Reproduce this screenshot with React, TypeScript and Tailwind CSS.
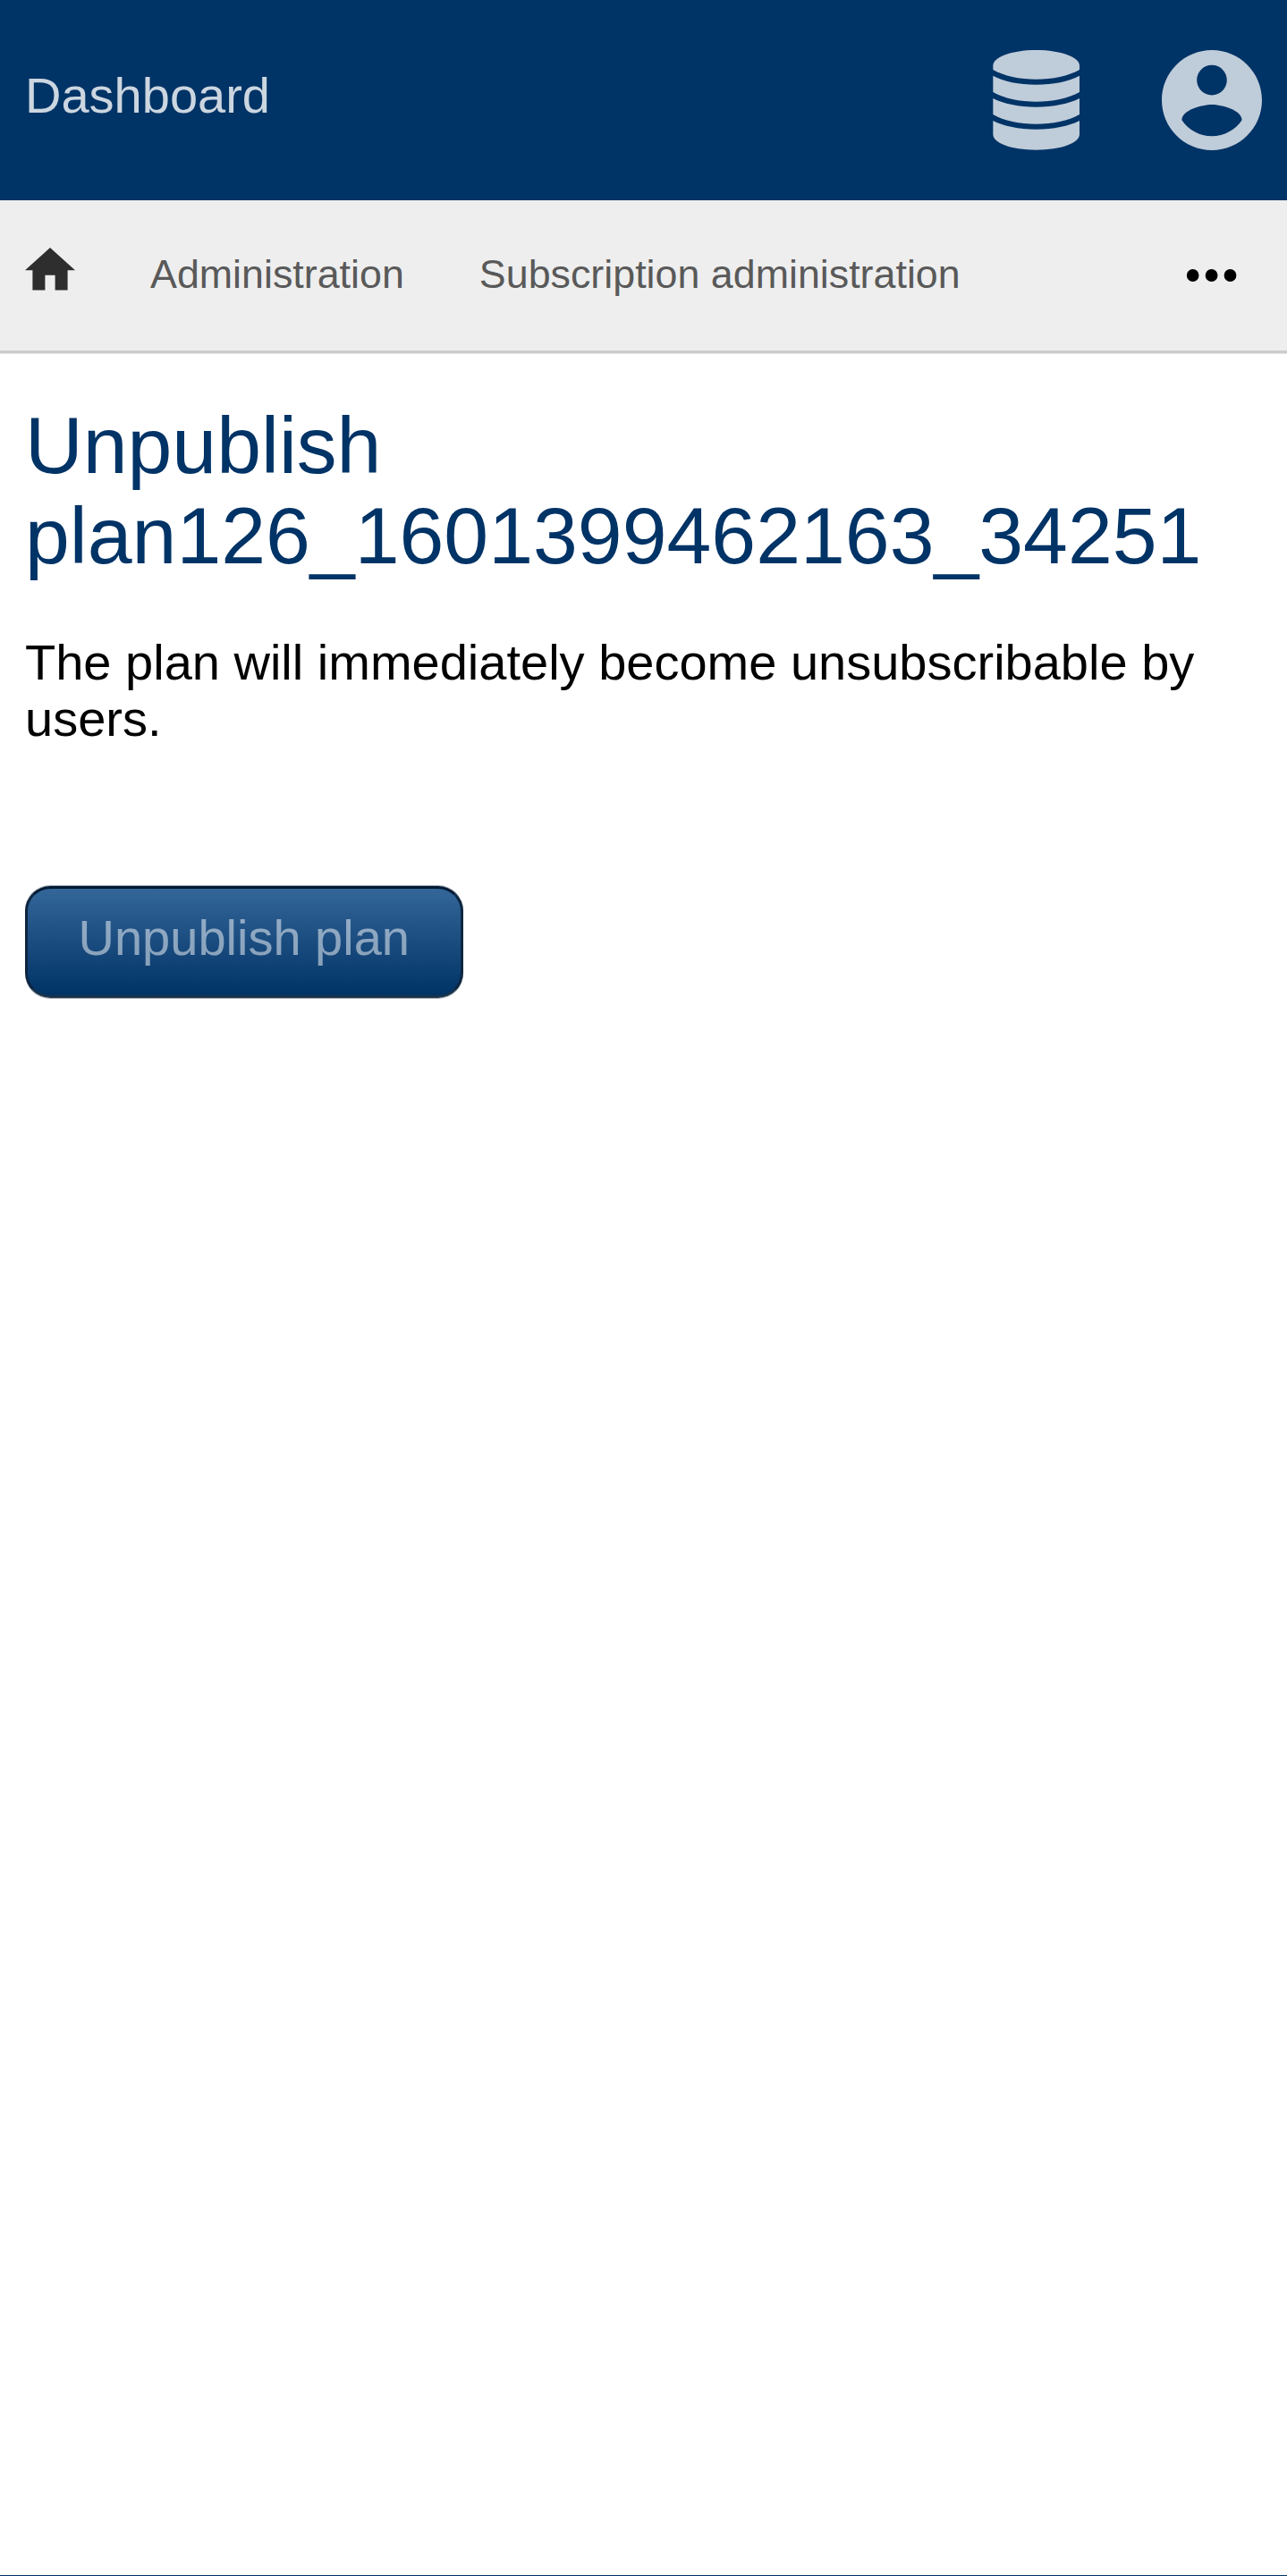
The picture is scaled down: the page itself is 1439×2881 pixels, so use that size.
const DatabaseIcon = () => (
  <svg className="h-28 w-[97px]" viewBox="90 108 291 336" fill="currentColor" aria-label="Subscriptions">
    <path d="M91 160C91 132 152 108 235.500 108S381 132 381 160V174C345 195 290 206 235.500 206S126 195 91 174Z" />
    <path d="M91 194C126 213 178 224 235.500 224S345 213 381 194V249C345 270 290 281 235.500 281S126 270 91 249Z" />
    <path d="M91 270C126 288 178 299 235.500 299S345 288 381 270V324C345 346 290 356 235.500 356S126 346 91 324Z" />
    <path d="M91 345C126 363 178 374 235.500 374S345 363 381 345V391C381 420 320 443 235.500 443S91 420 91 391Z" />
  </svg>
);

const AccountIcon = () => (
  <svg className="size-28" viewBox="2 2 20 20" fill="currentColor" aria-label="Account">
    <path d="M12 2C6.480 2 2 6.480 2 12s4.480 10 10 10 10-4.480 10-10S17.520 2 12 2zm0 3c1.660 0 3 1.340 3 3s-1.340 3-3 3-3-1.340-3-3 1.340-3 3-3zm0 14.200c-2.500 0-4.710-1.280-6-3.220.030-1.990 4-3.080 6-3.080 1.990 0 5.970 1.090 6 3.080-1.290 1.940-3.500 3.220-6 3.220z" />
  </svg>
);

const HomeIcon = () => (
  <svg className="mt-[53.3px] h-[47.6px] w-14 shrink-0" viewBox="2 3 20 17" fill="#2e2e2e" aria-label="Home">
    <path d="M10 20v-6h4v6h5v-8h3L12 3 2 12h3v8z" />
  </svg>
);

const MoreIcon = () => (
  <svg className="mt-[77px] ml-auto h-3.5 w-14 shrink-0" viewBox="0 0 56 14" aria-label="More">
    <ellipse cx="6.700" cy="7" rx="6.800" ry="7" />
    <ellipse cx="27.600" cy="7" rx="6.900" ry="7" />
    <ellipse cx="48.500" cy="7" rx="6.900" ry="7" />
  </svg>
);

export default function App() {
  return (
    <div className="flex h-[2881px] w-full flex-col border-b border-[#003366] bg-white font-['Liberation_Sans',Arial,sans-serif] text-black">
      <header className="flex h-56 shrink-0 items-start bg-[#003366] pl-7 text-[#bfccd9]">
        <a className="mt-[75px] text-[56px] leading-[63px] text-[#ccd6e0]">Dashboard</a>
        <div className="mt-14 mr-[28.5px] ml-auto flex gap-[91.5px]">
          <DatabaseIcon />
          <AccountIcon />
        </div>
      </header>
      <nav className="flex h-[171px] shrink-0 items-start border-b-[3px] border-[#cccccc] bg-[#eeeeee] pr-14 pl-7 text-[44.8px] leading-[51px] text-[#595959] shadow-[0_1px_0_#e5e5e5]">
        <HomeIcon />
        <a className="mt-[57px] ml-[84px]">Administration</a>
        <a className="mt-[57px] ml-[84px]">Subscription administration</a>
        <MoreIcon />
      </nav>
      <main className="px-7 pt-[53px]">
        <h1 className="text-[89.6px] leading-[101px] text-[#003366]">Unpublish plan126_1601399462163_34251</h1>
        <p className="mt-[59px] text-[56px] leading-[63px]">The plan will immediately become unsubscribable by users.</p>
        <button className="mt-[156px] flex h-[125px] w-[489.5px] items-start justify-center rounded-[28px] border-[3px] border-x-[#0d2640] border-t-[#001a33] border-b-[#19334c] bg-linear-to-b from-[#336699] to-[#003366] pt-[23px] text-[56px] leading-[63px] whitespace-nowrap text-white/50 shadow-[0_-1px_0_#99a3ad,0_1px_0_#99a3ad]">
          Unpublish plan
        </button>
      </main>
    </div>
  );
}
